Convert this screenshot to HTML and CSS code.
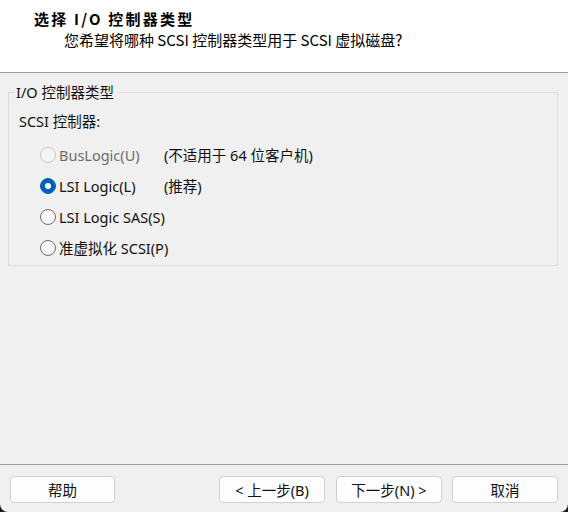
FILE: index.html
```html
<!DOCTYPE html>
<html lang="zh-CN">
<head>
<meta charset="utf-8">
<title>新建虚拟机向导</title>
<link rel="stylesheet" href="styles.css">
</head>
<body>
<div class="window">
  <header class="header">
    <div class="title">选择 I/O 控制器类型</div>
    <div class="subtitle">您希望将哪种 SCSI 控制器类型用于 SCSI 虚拟磁盘?</div>
  </header>
  <main class="content">
    <fieldset class="group">
      <legend class="legend">I/O 控制器类型</legend>
      <div class="caption">SCSI 控制器:</div>
      <div class="options">
        <div class="option disabled"><span class="radio"></span><span class="label">BusLogic(U)</span><span class="note">(不适用于 64 位客户机)</span></div>
        <div class="option checked"><span class="radio"></span><span class="label">LSI Logic(L)</span><span class="note">(推荐)</span></div>
        <div class="option"><span class="radio"></span><span class="label">LSI Logic SAS(S)</span></div>
        <div class="option"><span class="radio"></span><span class="label">准虚拟化 SCSI(P)</span></div>
      </div>
    </fieldset>
  </main>
  <footer class="footer">
    <button class="btn btn-help">帮助</button>
    <div class="nav">
      <button class="btn btn-back">&lt; 上一步(B)</button>
      <button class="btn btn-next">下一步(N) &gt;</button>
      <button class="btn btn-cancel">取消</button>
    </div>
  </footer>
</div>
</body>
</html>
```
FILE: styles.css
```css
html {
  margin: 0;
  padding: 0;
  background: #1c1c1c;
}
body {
  margin: 0;
  padding: 0;
  font-family: "Noto Sans", "Noto Sans CJK SC", sans-serif;
  font-size: 14.5px;
  color: #111;
}
.window {
  width: 568px;
  height: 512px;
  background: #f0f0f0;
  display: flex;
  flex-direction: column;
  border-radius: 0 0 8px 8px;
  overflow: hidden;
}
.header {
  box-sizing: border-box;
  background: #fff;
  border-bottom: 1px solid #a0a0a0;
  padding-top: 9px;
  font-family: "Noto Sans CJK SC", sans-serif;
  font-size: 15px;
  color: #000;
  flex: none;
  height: 73px;
}
.title {
  font-weight: bold;
  line-height: 20px;
  padding-left: 34px;
  letter-spacing: 2.2px;
}
.subtitle {
  line-height: 20px;
  margin-top: 1px;
  padding-left: 64px;
  letter-spacing: 0;
}
.content {
  flex: 1;
  padding: 9px 10px 0 8px;
}
.group {
  margin: 0;
  border: 1px solid #dcdcdc;
  padding: 0 10px 2px 10px;
  min-inline-size: 0;
}
.legend {
  line-height: 20px;
  padding: 0 3px 0 1px;
  margin-left: -4px;
}
.caption {
  line-height: 20px;
  margin-top: 9px;
  margin-bottom: 8px;
}
.options {
  padding-left: 21px;
}
.option {
  height: 31px;
  display: flex;
  align-items: center;
}
.radio {
  width: 16px;
  height: 16px;
  box-sizing: border-box;
  border-radius: 50%;
  border: 1px solid #6e6e6e;
  background: #f7f7f7;
  flex: none;
  display: flex;
  align-items: center;
  justify-content: center;
}
.disabled .radio {
  border-color: #c4c4c4;
  background: #f5f5f5;
}
.checked .radio {
  border-color: #005fb8;
  background: #005fb8;
}
.checked .radio::after {
  content: "";
  width: 6px;
  height: 6px;
  border-radius: 50%;
  background: #fff;
}
.label {
  margin-left: 3px;
  width: 105px;
  white-space: nowrap;
  line-height: 20px;
}
.disabled .label {
  color: #6d6d6d;
}
.note {
  line-height: 20px;
  white-space: nowrap;
}
.footer {
  flex: none;
  border-top: 1px solid #a0a0a0;
  padding: 11px 10px 9px 10px;
  display: flex;
  justify-content: space-between;
}
.nav {
  display: flex;
}
.btn {
  height: 27px;
  width: 106px;
  box-sizing: border-box;
  border: 1px solid #d0d0d0;
  border-radius: 4px;
  background: #fdfdfd;
  font-family: "Noto Sans", "Noto Sans CJK SC", sans-serif;
  font-size: 14.5px;
  color: #111;
  padding: 0;
  line-height: 20px;
}
.btn-help {
  width: 105px;
}
.btn-next {
  margin-left: 11px;
}
.btn-cancel {
  margin-left: 10px;
}
```
